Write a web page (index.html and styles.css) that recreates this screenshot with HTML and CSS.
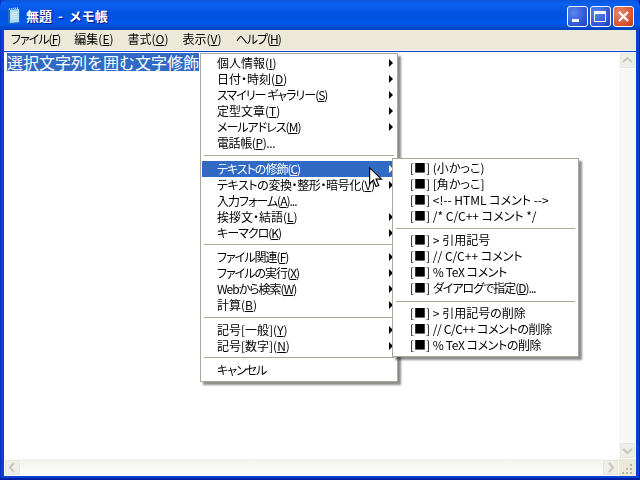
FILE: index.html
```html
<!DOCTYPE html>
<html lang="ja">
<head>
<meta charset="utf-8">
<title>無題 - メモ帳</title>
<link rel="stylesheet" href="styles.css">
</head>
<body>
<div class="window">
  <header class="titlebar">
    <svg class="app-icon" width="16" height="18" viewBox="0 0 16 18"><path d="M1 2l10-1 2 1v14l-10 1-2-1z" fill="#2a6cb8"/><path d="M3 3l9-1v13l-9 1z" fill="#a8d8f4"/><path d="M4 6l7-.7M4 8l7-.7M4 10l7-.7M4 12l7-.7" stroke="#d8f0fc" stroke-width="1"/><path d="M2 2l10-1" stroke="#cfe2f2" stroke-width="1.500" stroke-dasharray="1 1"/></svg>
    <span class="title-text">無題 - メモ帳</span>
    <div class="caption-buttons">
      <span class="cap cap-blue"><svg width="21" height="21" viewBox="0 0 21 21"><rect x="5" y="13" width="7" height="3" fill="#fff"/></svg></span>
      <span class="cap cap-blue"><svg width="21" height="21" viewBox="0 0 21 21"><path d="M4.500 5.500h11v10h-11z" fill="none" stroke="#fff" stroke-width="1"/><rect x="4" y="5" width="12" height="3" fill="#fff"/></svg></span>
      <span class="cap cap-red"><svg width="21" height="21" viewBox="0 0 21 21"><path d="M6 6l9 9M15 6l-9 9" stroke="#fff" stroke-width="2.200"/></svg></span>
    </div>
  </header>
  <nav class="menubar">
    <span class="menubar-item tight">ファイル(<u>F</u>)</span>
    <span class="menubar-item">編集(<u>E</u>)</span>
    <span class="menubar-item">書式(<u>O</u>)</span>
    <span class="menubar-item">表示(<u>V</u>)</span>
    <span class="menubar-item tight">ヘルプ(<u>H</u>)</span>
  </nav>
  <div class="client">
    <div class="edit-row">
      <div class="editor"><span class="selected">選択文字列を囲む文字修飾</span></div>
      <div class="vscroll">
        <span class="sb-btn"><svg width="17" height="17" viewBox="0 0 17 17"><path d="M4 10l4.500-4 4.500 4" fill="none" stroke="#c6c8c0" stroke-width="2"/></svg></span>
        <span class="sb-track"></span>
        <span class="sb-btn"><svg width="17" height="17" viewBox="0 0 17 17"><path d="M4 7l4.500 4 4.500-4" fill="none" stroke="#c6c8c0" stroke-width="2"/></svg></span>
      </div>
    </div>
    <div class="hscroll">
      <span class="sb-btn"><svg width="17" height="17" viewBox="0 0 17 17"><path d="M10 4l-4 4.500 4 4.500" fill="none" stroke="#c6c8c0" stroke-width="2"/></svg></span>
      <span class="sb-track-h"></span>
      <span class="sb-btn"><svg width="17" height="17" viewBox="0 0 17 17"><path d="M7 4l4 4.500-4 4.500" fill="none" stroke="#c6c8c0" stroke-width="2"/></svg></span>
      <span class="grip"><svg width="17" height="17" viewBox="0 0 17 17"><path d="M11 5h2v2h-2zM7 9h2v2H7zM11 9h2v2h-2zM3 13h2v2H3zM7 13h2v2H7zM11 13h2v2h-2z" fill="#b8b4a0"/></svg></span>
    </div>
  </div>
</div>

<div class="popup main-menu">
  <div class="item sub">個人情報(<u>I</u>)</div>
  <div class="item sub">日付・時刻(<u>D</u>)</div>
  <div class="item sub tight">スマイリー ギャラリー(<u>S</u>)</div>
  <div class="item sub">定型文章(<u>T</u>)</div>
  <div class="item sub tight">メールアドレス(<u>M</u>)</div>
  <div class="item semi">電話帳(<u>P</u>)...</div>
  <div class="sep sep-10"></div>
  <div class="item sub active tight">テキストの修飾(<u>C</u>)</div>
  <div class="item sub semi">テキストの変換・整形・暗号化(<u>V</u>)</div>
  <div class="item tight">入力フォーム(<u>A</u>)...</div>
  <div class="item sub">挨拶文・結語(<u>L</u>)</div>
  <div class="item sub tight">キーマクロ(<u>K</u>)</div>
  <div class="sep"></div>
  <div class="item sub tight">ファイル関連(<u>F</u>)</div>
  <div class="item sub tight">ファイルの実行(<u>X</u>)</div>
  <div class="item sub tight">Webから検索(<u>W</u>)</div>
  <div class="item sub">計算(<u>B</u>)</div>
  <div class="sep sep-9"></div>
  <div class="item sub">記号[一般](<u>Y</u>)</div>
  <div class="item sub">記号[数字](<u>N</u>)</div>
  <div class="sep"></div>
  <div class="item tight">キャンセル</div>
</div>

<div class="popup sub-menu">
  <div class="item">[■] (小かっこ)</div>
  <div class="item">[■] [角かっこ]</div>
  <div class="item">[■] &lt;!-- HTML コメント --&gt;</div>
  <div class="item">[■] /* C/C++ コメント */</div>
  <div class="sep"></div>
  <div class="item">[■] &gt; 引用記号</div>
  <div class="item">[■] // C/C++ コメント</div>
  <div class="item">[■] <span class="semi">% TeX コメント</span></div>
  <div class="item">[■] <span class="tight">ダイアログで指定(<u>D</u>)...</span></div>
  <div class="sep sep-9"></div>
  <div class="item">[■] &gt; 引用記号の削除</div>
  <div class="item">[■] <span class="semi">// C/C++ コメントの削除</span></div>
  <div class="item">[■] <span class="semi">% TeX コメントの削除</span></div>
</div>

<svg class="cursor" width="15" height="24" viewBox="0 0 14 22"><path d="M1.500 1.500v15l3.500-3.500 2.500 6 2.500-1-2.500-6h5z" fill="#fff" stroke="#000" stroke-width="1.100"/></svg>
</body>
</html>
```
FILE: styles.css
```css
* { box-sizing: border-box; }
html, body { margin: 0; padding: 0; width: 640px; height: 480px; overflow: hidden; }
body { font-family: "Noto Sans CJK JP", "Liberation Sans", sans-serif; font-size: 12px; color: #000; position: relative; background: #0831d9; }
.window { width: 640px; height: 480px; display: flex; flex-direction: column; background: #0a3fd8; box-shadow: inset -1px -2px 0 #001ea0, inset 1px 0 0 #0a2fc0; }
.titlebar { height: 30px; flex: none; display: flex; align-items: center; padding: 0 6px 0 7px; background: linear-gradient(#0a55d8 0, #0a5ff0 3px, #0a60f0 5px, #0052e0 14px, #0058ea 24px, #0049c8 28px, #0a3fc0 30px); border-radius: 7px 7px 0 0; }
.app-icon { flex: none; margin: 1px 3px 0 0; }
.title-text { color: #fff; font-weight: 700; font-size: 13px; word-spacing: 3px; text-shadow: 1px 1px 1px #0f1089; white-space: pre; }
.caption-buttons { margin-left: auto; display: flex; gap: 2px; padding-top: 3px; }
.cap { width: 21px; height: 21px; border: 1px solid #fff; border-radius: 3px; display: block; }
.cap svg { display: block; margin: -1px; }
.cap-blue { background: radial-gradient(circle at 30% 30%, #5a86ee, #2a50d0 75%, #1c3cb0); }
.cap-red { background: radial-gradient(circle at 30% 30%, #e8866a, #d8502c 70%, #b83a18); }
.menubar { height: 21px; margin: 0 4px; flex: none; display: flex; align-items: center; gap: 14px; background: #ece9d8; padding: 0 0 3px 7px; border-bottom: 1px solid #f6f5ee; font-feature-settings: "palt"; will-change: transform; }
.menubar-item { white-space: nowrap; font-size: 12px; }
.client { flex: 1; margin: 1px 4px 4px; display: flex; flex-direction: column; background: #fff; min-height: 0; }
.edit-row { flex: 1; display: flex; min-height: 0; }
.editor { flex: 1; padding: 1px 0 0 3px; font-size: 16px; line-height: 18px; white-space: nowrap; }
.selected { display: inline-block; height: 18px; line-height: 18px; background: #316ac5; color: #fff; }
.vscroll { width: 17px; flex: none; display: flex; flex-direction: column; background: #f7f7f3; }
.sb-track { flex: 1; }
.sb-btn { width: 17px; height: 17px; flex: none; display: block; background: #efeee7; border: 1px solid #fbfbf8; border-radius: 2px; box-shadow: inset 0 0 0 1px #e6e5dc; }
.sb-btn svg { display: block; margin: -1px; }
.hscroll { height: 17px; flex: none; display: flex; background: linear-gradient(#f3f2ec, #fdfdfa); }
.sb-track-h { flex: 1; }
.grip { width: 17px; height: 17px; background: #ece9d8; display: block; }
.grip svg { display: block; }
.popup { position: absolute; background: #fff; border: 1px solid #aca899; box-shadow: 3px 3px 2px rgba(0,0,0,.45); padding: 1px 1px 2px; white-space: nowrap; font-feature-settings: "palt"; will-change: transform; }
.main-menu { left: 200px; top: 53px; width: 198px; height: 329px; }
.sub-menu { left: 392px; top: 158px; width: 187px; height: 199px; }
.item { height: 16px; line-height: 16px; padding-left: 15px; position: relative; font-size: 12px; }
.sub-menu .item { padding-left: 16px; }
.tight { letter-spacing: -1px; }
.semi { letter-spacing: -.4px; }
.sub::after { content: ""; position: absolute; right: 3px; top: 4px; border-left: 4px solid #000; border-top: 4px solid transparent; border-bottom: 4px solid transparent; }
.active { background: #316ac5; color: #fff; }
.active::after { border-left-color: #fff; }
.sep { height: 8px; padding-top: 3px; }
.sep::before { content: ""; display: block; height: 1px; margin: 0 2px 0 2px; background: #aca899; }
.sep-10 { height: 10px; padding-top: 4px; }
.sep-9 { height: 9px; padding-top: 4px; }
.sub-menu .sep { padding-top: 4px; }
.sub-menu .sep-9 { padding-top: 5px; }
.cursor { position: absolute; left: 368px; top: 166px; z-index: 2; }
```
